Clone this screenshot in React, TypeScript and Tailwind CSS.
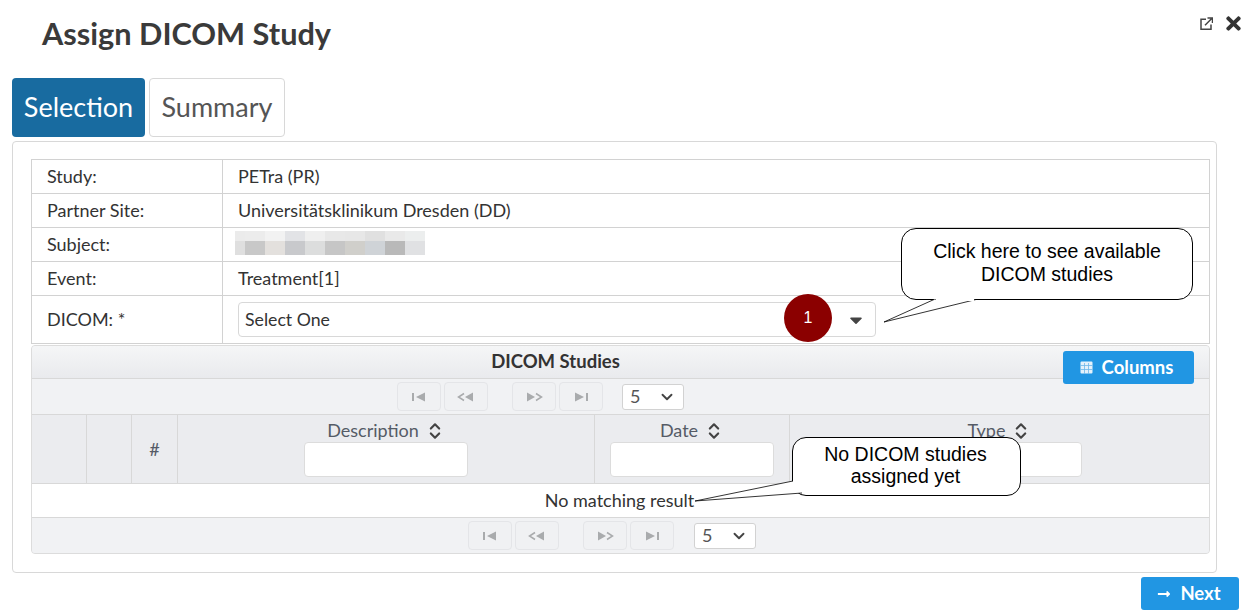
import { ChevronDown, ChevronsUpDown } from "lucide-react";
import { FaTimes, FaCaretDown, FaLongArrowAltRight } from "react-icons/fa";

const rows = [
  { label: "Study:", value: "PETra (PR)" },
  { label: "Partner Site:", value: "Universitätsklinikum Dresden (DD)" },
];

// pixelated subject name, one swatch per blurred block
const blurTop = ["#ebebeb", "#ececec", "#f2f2f2", "#e2e3e6", "#efefef", "#e8e8e8", "#e7e7e7", "#e0e0e0", "#e9e9e9", "#eceeee"];
const blurBottom = ["#dfdfdf", "#c8c8c8", "#e3e0dd", "#c8c9cc", "#dcdddd", "#c6c6c6", "#d0cfcb", "#cfd3d7", "#b9b9b9", "#e0e1e3"];
const blurWidths = ["w-[10px]", "w-[20px]", "w-[20px]", "w-[20px]", "w-[20px]", "w-[20px]", "w-[20px]", "w-[20px]", "w-[20px]", "w-[20px]"];

function PagerIcon({ kind }: { kind: "first" | "prev" | "next" | "last" }) {
  return (
    <svg width="18" height="10" viewBox="0 0 18 10" fill="#a9abad">
      {kind === "first" && (
        <>
          <rect x="2" y="1" width="2" height="8" />
          <path d="M6 5l9-4.5v9z" />
        </>
      )}
      {kind === "prev" && (
        <>
          <path d="M7 1.5L1.5 5 7 8.5" fill="none" stroke="#a9abad" strokeWidth="1.5" />
          <path d="M16 0.5v9L8 5z" />
        </>
      )}
      {kind === "next" && (
        <>
          <path d="M2 0.5v9L10 5z" />
          <path d="M11 1.5L16.5 5 11 8.5" fill="none" stroke="#a9abad" strokeWidth="1.5" />
        </>
      )}
      {kind === "last" && (
        <>
          <path d="M3 0.5v9L12 5z" />
          <rect x="14" y="1" width="2" height="8" />
        </>
      )}
    </svg>
  );
}

function PagerButton({ kind }: { kind: "first" | "prev" | "next" | "last" }) {
  return (
    <span className="flex h-[29px] w-[44px] items-center justify-center rounded-[4px] border border-[#e4e5e8] bg-[#f0f1f3]">
      <PagerIcon kind={kind} />
    </span>
  );
}

function Pager({ className, selectGap }: { className: string; selectGap: string }) {
  return (
    <div className={className}>
      <div className="flex gap-[3px]">
        <PagerButton kind="first" />
        <PagerButton kind="prev" />
      </div>
      <div className="ml-[24px] flex gap-[3px]">
        <PagerButton kind="next" />
        <PagerButton kind="last" />
      </div>
      <div className={`${selectGap} flex h-[26px] w-[62px] items-center justify-between rounded-[3px] border border-[#d2d2d2] bg-white pl-[7px] pr-[7px] text-[18px] text-[#555555]`}>
        5
        <ChevronDown size={18} strokeWidth={2.5} className="text-[#444444]" />
      </div>
    </div>
  );
}

function HeaderCell({ title, className }: { title: string; className: string }) {
  return (
    <div className={className}>
      <div className="flex h-[23px] items-center gap-[6px] text-[18px] text-[#555b66]">
        {title}
        <ChevronsUpDown size={20} strokeWidth={2.6} className="text-[#444444]" />
      </div>
      <div className="h-[35px] w-[164px] rounded-[4px] border border-[#dcdcdc] bg-white" />
    </div>
  );
}

function Row({ label, children, className }: { label: string; children: React.ReactNode; className: string }) {
  return (
    <div className={`flex border-b border-[#d2d2d2] ${className}`}>
      <div className="flex w-[191px] shrink-0 items-center border-r border-[#d2d2d2] pl-[15px]">{label}</div>
      <div className="flex flex-1 items-center pl-[15px]">{children}</div>
    </div>
  );
}

export default function App() {
  return (
    <div className="relative h-[610px] w-[1250px] overflow-hidden bg-white font-['Lato',sans-serif] text-[18px] text-[#333333]">
      {/* titlebar */}
      <div className="flex h-[78px] items-start justify-between">
        <h1 className="ml-[42px] mt-[15px] text-[30.7px] font-bold leading-[38px] text-[#3a3a3a]">Assign DICOM Study</h1>
        <div className="mr-[6px] mt-[13px] flex items-center gap-[10px] text-[#333333]">
          <svg width="13" height="13" viewBox="0 0 13 13" fill="none" stroke="#444444" strokeWidth="1.5">
            <path d="M6 2.2H1v10h10V7.5" />
            <path d="M5 8.2L11.5 1.7M7.5 1h5v5" />
          </svg>
          <FaTimes size={21} />
        </div>
      </div>

      {/* tabs */}
      <div className="ml-[12px] flex gap-[4px] text-[27px] leading-none">
        <div className="flex h-[59px] w-[133px] items-center justify-center rounded-[4px] bg-[#186ba0] pb-[2px] text-white">Selection</div>
        <div className="flex h-[59px] w-[136px] items-center justify-center rounded-[4px] border border-[#d8d8d8] pb-[2px] text-[#555555]">Summary</div>
      </div>

      {/* panel */}
      <div className="ml-[12px] mt-[4px] h-[432px] w-[1205px] rounded-[4px] border border-[#d8d8d8] px-[18px] pt-[17px]">
        <div className="w-[1179px] border-x border-t border-[#d2d2d2]">
          {rows.map((r) => (
            <Row key={r.label} label={r.label} className="h-[34px]">
              {r.value}
            </Row>
          ))}
          <Row label="Subject:" className="h-[34px]">
            <div className="ml-[-3px] mt-[-3px] flex flex-col">
              <div className="flex h-[10px]">
                {blurTop.map((c, i) => (
                  <span key={i} className={blurWidths[i]} style={{ backgroundColor: c }} />
                ))}
              </div>
              <div className="flex h-[14px]">
                {blurBottom.map((c, i) => (
                  <span key={i} className={blurWidths[i]} style={{ backgroundColor: c }} />
                ))}
              </div>
            </div>
          </Row>
          <Row label="Event:" className="h-[34px]">
            Treatment[1]
          </Row>
          <Row label="DICOM: *" className="h-[48px]">
            <div className="flex h-[35px] w-[638px] items-center justify-between rounded-[4px] border border-[#d8d8d8] pl-[6px] pr-[9px] pt-[1px] text-[17.7px]">
              Select One
              <FaCaretDown size={20} className="text-[#444444]" />
            </div>
          </Row>
        </div>

        {/* datatable */}
        <div className="mt-[1px] w-[1179px] overflow-hidden rounded-[4px] border border-[#dcdcdc] bg-[#ebecef]">
          <div className="flex h-[33px] items-center justify-center border-b border-[#d8d8d8] bg-gradient-to-b from-[#f5f6f7] to-[#e9eaed] pr-[130px] text-[18.5px] font-bold">
            DICOM Studies
          </div>
          <Pager className="flex h-[36px] items-center border-b border-[#d8d8d8] bg-[#f1f2f4] pl-[365px]" selectGap="ml-[19px]" />
          <div className="flex h-[69px] border-b border-[#d8d8d8] text-[#555b66]">
            <div className="w-[55px] border-r border-[#d8d8d8]" />
            <div className="w-[45px] border-r border-[#d8d8d8]" />
            <div className="flex w-[46px] items-center justify-center border-r border-[#d8d8d8]">#</div>
            <HeaderCell title="Description" className="flex w-[417px] flex-col items-center border-r border-[#d8d8d8] pt-[4px]" />
            <HeaderCell title="Date" className="flex w-[195px] flex-col items-center border-r border-[#d8d8d8] pt-[4px]" />
            <HeaderCell title="Type" className="flex flex-1 flex-col items-center pt-[4px]" />
          </div>
          <div className="flex h-[34px] items-center justify-center border-b border-[#d8d8d8] bg-white pr-[2px] text-[#333333]">
            No matching result
          </div>
          <Pager className="flex h-[35px] items-center bg-[#f1f2f4] pl-[436px]" selectGap="ml-[20px]" />
        </div>
      </div>

      {/* footer */}
      <div className="mr-[11px] mt-[4px] flex justify-end">
        <button className="flex h-[33px] w-[98px] items-center justify-center gap-[9px] rounded-[3px] bg-[#2196e3] pr-[2px] text-[18.5px] font-bold text-white">
          <FaLongArrowAltRight size={14} />
          Next
        </button>
      </div>

      {/* columns toggler */}
      <button className="absolute left-[1063px] top-[351px] flex h-[33px] w-[131px] items-center justify-center gap-[9px] rounded-[3px] bg-[#2196e3] pr-[4px] text-[18.5px] font-bold text-white">
        <svg width="13" height="13" viewBox="0 0 13 13" fill="#e3f1fb">
          <path d="M1.5 0.5h10a1 1 0 0 1 1 1v10a1 1 0 0 1-1 1h-10a1 1 0 0 1-1-1v-10a1 1 0 0 1 1-1z" />
          <path d="M0.5 4.5h12M0.5 8.5h12M4.5 2v11M8.5 2v11" stroke="#6fb8ea" strokeWidth="0.8" />
        </svg>
        Columns
      </button>

      {/* annotation badge */}
      <div className="absolute left-[784px] top-[294px] flex h-[48px] w-[48px] items-center justify-center rounded-full bg-[#8b0000] font-['Liberation_Sans',sans-serif] text-[16px] text-white">
        1
      </div>

      {/* callouts */}
      <div className="absolute left-[901px] top-[228px] flex h-[72px] w-[292px] items-center justify-center rounded-[15px] border border-black bg-white pb-[2px] text-center font-['Liberation_Sans',sans-serif] text-[19.5px] leading-[23px] text-black">
        Click here to see available
        <br />
        DICOM studies
      </div>
      <svg className="absolute left-[880px] top-[295px]" width="100" height="30" viewBox="0 0 100 30" fill="white">
        <path d="M54 4.5L4 27L96 4.5" stroke="black" strokeWidth="0.8" />
        <path d="M56 4.5H94" stroke="white" strokeWidth="3" />
      </svg>
      <div className="absolute left-[792px] top-[437px] flex h-[59px] w-[229px] items-center justify-center rounded-[14px] border border-black bg-white pb-[3px] pr-[2px] text-center font-['Liberation_Sans',sans-serif] text-[19.5px] leading-[22px] text-black">
        No DICOM studies
        <br />
        assigned yet
      </div>
      <svg className="absolute left-[690px] top-[480px]" width="120" height="30" viewBox="0 0 120 30" fill="white">
        <path d="M103 1L5 21L112 13" stroke="black" strokeWidth="0.8" />
        <path d="M103.5 3L103 11" stroke="white" strokeWidth="3" />
      </svg>
    </div>
  );
}
